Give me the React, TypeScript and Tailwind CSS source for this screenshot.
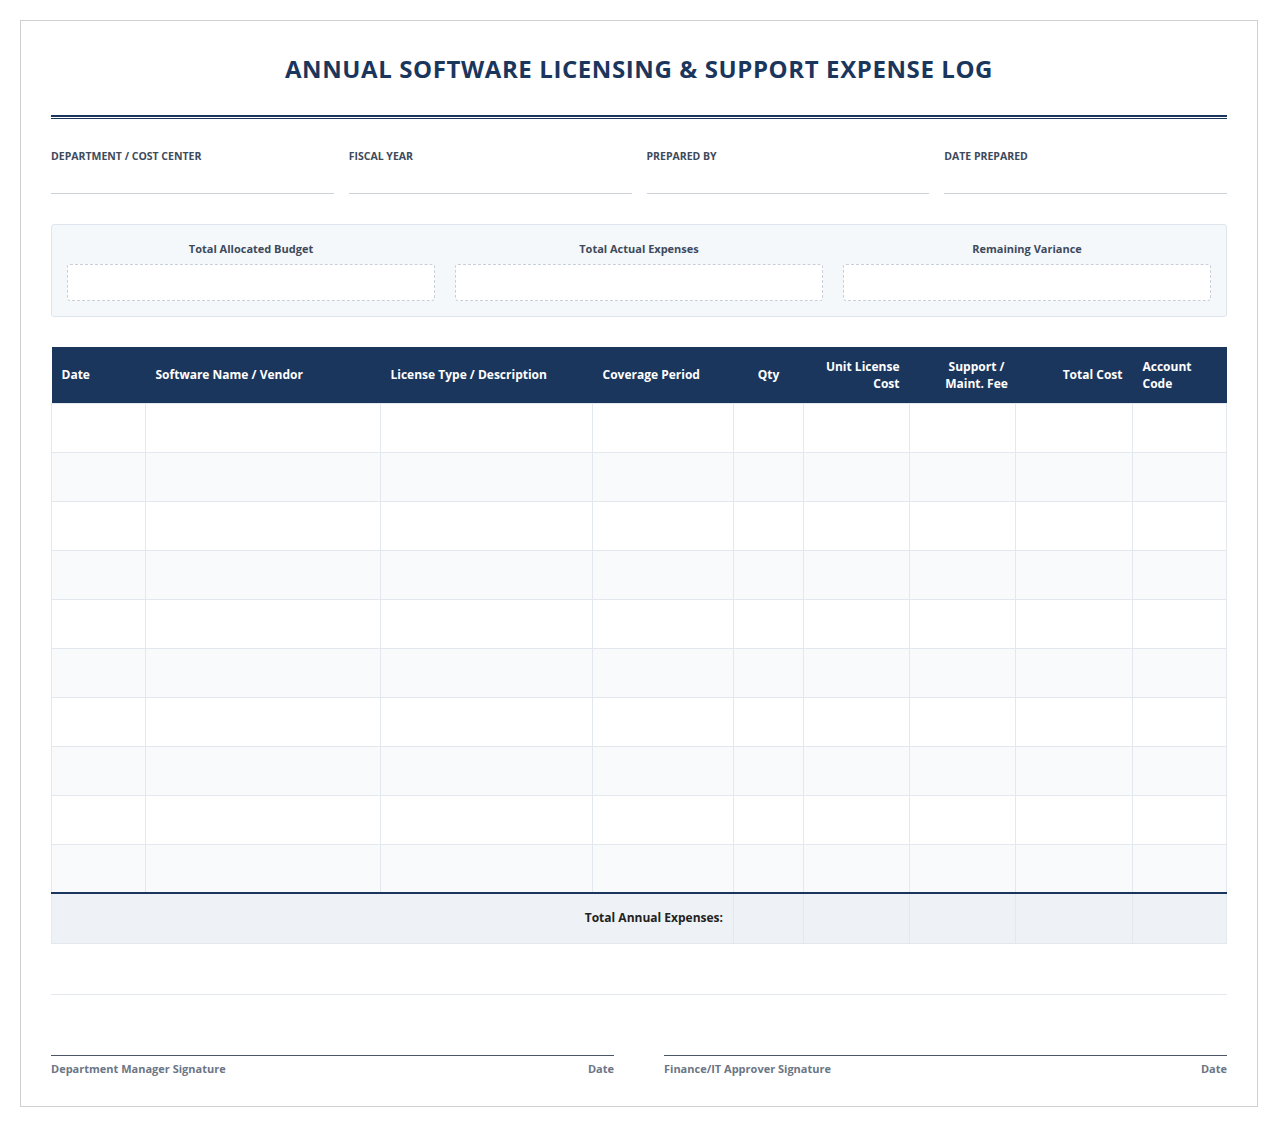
const cols = [
  { w: 94, label: ["Date"], align: "text-left px-[10px]" },
  { w: 235, label: ["Software Name / Vendor"], align: "text-left px-[10px]" },
  { w: 212, label: ["License Type / Description"], align: "text-left px-[10px]" },
  { w: 141, label: ["Coverage Period"], align: "text-left px-[10px]" },
  { w: 70, label: ["Qty"], align: "text-center px-[10px]" },
  { w: 106, label: ["Unit License", "Cost"], align: "text-right px-[10px]" },
  { w: 106, label: ["Support /", "Maint. Fee"], align: "text-center pl-[28px] pr-[0px]" },
  { w: 117, label: ["Total Cost"], align: "text-right px-[10px]" },
  { w: 94, label: ["Account", "Code"], align: "text-left px-[10px]" },
];

export default function App() {
  const font = { fontFamily: '"Open Sans", "Noto Sans", sans-serif' };
  return (
    <div className="bg-white p-5" style={font}>
      <div className="border border-[#d0d0d0] px-[30px] pt-[30px] pb-[30px] text-[#1b365d]">
        <h1 className="text-center text-[24px] font-bold tracking-[0.6px] leading-[36px] text-[#1b365d]">
          ANNUAL SOFTWARE LICENSING &amp; SUPPORT EXPENSE LOG
        </h1>
        <div className="mt-[28px] h-[4px] border-t-[2px] border-b border-[#1b365d]" />
        <div className="mt-[30px] grid grid-cols-4 gap-[15px]">
          {["DEPARTMENT / COST CENTER", "FISCAL YEAR", "PREPARED BY", "DATE PREPARED"].map((l) => (
            <div key={l} className="border-b border-[#cbd2da] h-[45px]">
              <div className="text-[10.5px] font-bold text-[#3d4a5c] leading-[14px]">{l}</div>
            </div>
          ))}
        </div>
        <div className="mt-[30px] rounded-[3px] border border-[#dfe5ec] bg-[#f5f8fb] px-[15px] pt-[16px] pb-[15px] grid grid-cols-3 gap-[20px]">
          {["Total Allocated Budget", "Total Actual Expenses", "Remaining Variance"].map((l) => (
            <div key={l}>
              <div className="text-center text-[11px] font-bold text-[#3d4a5c] leading-[16px]">{l}</div>
              <div className="mt-[7px] h-[37px] rounded-[3px] border border-dashed border-[#c8cfd8] bg-white" />
            </div>
          ))}
        </div>
        <table className="mt-[30px] w-full border-collapse table-fixed">
          <colgroup>
            {cols.map((c, i) => (
              <col key={i} style={{ width: c.w }} />
            ))}
          </colgroup>
          <thead>
            <tr className="bg-[#1b365d] h-[56px]">
              {cols.map((c, i) => (
                <th key={i} className={`text-[12px] font-bold text-white leading-[17px] ${c.align}`}>
                  {c.label.map((t) => (
                    <div key={t}>{t}</div>
                  ))}
                </th>
              ))}
            </tr>
          </thead>
          <tbody>
            {Array.from({ length: 10 }).map((_, r) => (
              <tr key={r} className={`h-[49px] ${r % 2 ? "bg-[#f8fafc]" : "bg-white"}`}>
                {cols.map((_, i) => (
                  <td key={i} className="border border-[#e3e8ee]" />
                ))}
              </tr>
            ))}
            <tr className="h-[50px] bg-[#eef2f6] border-t-[2px] border-[#1b365d]">
              <td colSpan={4} className="border-b border-l border-[#e3e8ee] text-right pr-[10px] text-[12px] font-bold text-[#222]">
                Total Annual Expenses:
              </td>
              {[0, 1, 2, 3, 4].map((i) => (
                <td key={i} className="border border-t-0 border-[#e3e8ee]" />
              ))}
            </tr>
          </tbody>
        </table>
        <div className="mt-[50px] border-t border-[#e3e8ee]" />
        <div className="mt-[60px] grid grid-cols-2 gap-[50px]">
          {["Department Manager Signature", "Finance/IT Approver Signature"].map((l) => (
            <div key={l} className="border-t border-[#4a5566] pt-[6px] flex justify-between text-[11px] font-bold text-[#6b7686] leading-[14px]">
              <span>{l}</span>
              <span>Date</span>
            </div>
          ))}
        </div>
      </div>
    </div>
  );
}
